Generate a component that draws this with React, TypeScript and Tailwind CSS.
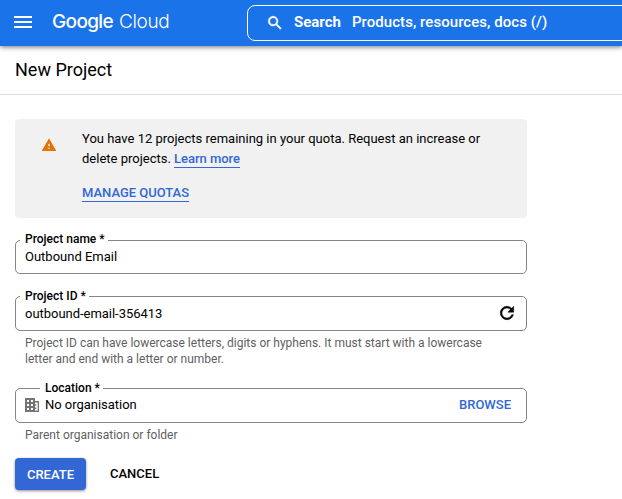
import type { ReactNode } from 'react';

function WarningIcon() {
  return (
    <svg className="mt-[1px] h-[16px] w-[16px] shrink-0" viewBox="0 0 24 24" fill="#e37400">
      <path d="M1 21h22L12 2 1 21zm12-3h-2v-2h2v2zm0-4h-2v-4h2v4z" />
    </svg>
  );
}

function OutlinedField({
  label,
  labelClass,
  className,
  children,
}: {
  label: string;
  labelClass: string;
  className: string;
  children: ReactNode;
}) {
  return (
    <div className={`relative flex w-[512px] items-center rounded-[5px] border border-[#80868b] ${className}`}>
      <span
        className={`absolute bg-white pr-[3px] pl-[5px] text-[12px] leading-4 font-medium whitespace-nowrap ${labelClass}`}
      >
        {label}
      </span>
      {children}
    </div>
  );
}

export default function App() {
  return (
    <div className="h-[499px] w-[622px] overflow-hidden bg-white font-[Roboto,sans-serif] text-[13px] text-black">
      <header className="relative flex h-[46px] items-center bg-[#1a73e8] text-white shadow-[0_1px_5px_rgba(0,0,0,0.55)]">
        <svg className="-mt-[2px] ml-[14px] h-[12px] w-[18px] shrink-0" viewBox="0 0 18 12" fill="#fff">
          <path d="M0 0h18v2H0zM0 5h18v2H0zM0 10h18v2H0z" />
        </svg>
        <div className="-mt-[3px] ml-[20px] flex w-[195px] shrink-0 gap-[5px] text-[19px] leading-6 font-[Inter,sans-serif]">
          <span className="w-[62px] font-medium tracking-[-0.65px]">Google</span>
          <span className="font-light tracking-[-0.35px]">Cloud</span>
        </div>
        <div className="-mt-[1px] flex h-[36px] w-[390px] shrink-0 items-center rounded-[8px] border border-white">
          <svg className="ml-[18px] h-[18px] w-[18px] shrink-0" viewBox="0 0 24 24" fill="#fff" stroke="#fff" strokeWidth="0.6">
            <path d="M15.5 14h-.79l-.28-.27C15.41 12.59 16 11.11 16 9.5 16 5.91 13.09 3 9.5 3S3 5.91 3 9.5 5.91 16 9.5 16c1.61 0 3.09-.59 4.23-1.57l.27.28v.79l5 4.99L20.49 19l-4.99-5zm-6 0C7.01 14 5 11.99 5 9.5S7.01 5 9.5 5 14 7.01 14 9.5 11.99 14 9.5 14z" />
          </svg>
          <span className="ml-[10px] w-[58px] text-[15px] font-bold">Search</span>
          <span className="text-[15px] font-medium tracking-[0.05px] whitespace-nowrap">Products, resources, docs (/)</span>
        </div>
      </header>

      <div className="flex h-[49px] items-center border-b border-[#dadce0] pl-[15px]">
        <h1 className="text-[18px] leading-6">New Project</h1>
      </div>

      <main className="flex flex-col items-start pl-[15px]">
        <section className="mt-[24px] flex h-[99px] w-[512px] rounded-[4px] bg-[#f1f1f1] pt-[10px] pl-[26px]">
          <div className="mt-[7px] w-[41px] shrink-0">
            <WarningIcon />
          </div>
          <div className="w-[420px] leading-5">
            <p>
              You have 12 projects remaining in your quota. Request an increase or
              <br />
              delete projects.{' '}
              <a className="border-b border-[#3367d6] pb-px font-medium tracking-[-0.03px] text-[#3367d6]">Learn more</a>
            </p>
            <p className="mt-[14px]">
              <a className="border-b border-[#3367d6] pb-px font-medium tracking-[-0.02px] text-[#3367d6]">MANAGE QUOTAS</a>
            </p>
          </div>
        </section>

        <OutlinedField label="Project name *" labelClass="left-[4px] top-[-10px]" className="mt-[22px] h-[34px] pl-[9px]">
          <span>Outbound Email</span>
        </OutlinedField>

        <OutlinedField label="Project ID *" labelClass="left-[4px] top-[-9px]" className="mt-[22px] h-[35px] pl-[9px]">
          <span className="w-[472px] tracking-[-0.03px]">outbound-email-356413</span>
          <svg className="-mt-px h-[20px] w-[20px]" viewBox="0 0 24 24" fill="#000" stroke="#000" strokeWidth="0.6">
            <path d="M17.65 6.35C16.2 4.9 14.21 4 12 4c-4.42 0-7.99 3.58-7.99 8s3.57 8 7.99 8c3.73 0 6.84-2.55 7.73-6h-2.08c-.82 2.33-3.04 4-5.65 4-3.31 0-6-2.69-6-6s2.69-6 6-6c1.66 0 3.14.69 4.22 1.78L13 11h7V4l-2.35 2.35z" />
          </svg>
        </OutlinedField>
        <p className="mt-[4px] ml-[10px] text-[12px] leading-4 text-[#5f5f5f]">
          Project ID can have lowercase letters, digits or hyphens. It must start with a lowercase
          <br />
          letter and end with a letter or number.
        </p>

        <OutlinedField label="Location *" labelClass="left-[24px] top-[-9px]" className="mt-[21px] h-[35px] pb-[2px] pl-[9px]">
          <svg className="h-[14px] w-[14px]" viewBox="0 0 14 14" fill="#757575" fillRule="evenodd">
            <path d="M0 0h10v3h4v11H0zM2 2h2v2H2zM6 2h2v2H6zM2 6h2v2H2zM6 6h2v2H6zM2 10h2v2H2zM6 10h2v2H6zM10 4.5h2.7v8H10v-1.5h1.3v-1.6H10V7.8h1.3V6.2H10z" />
          </svg>
          <span className="ml-[6px] w-[414px] tracking-[-0.03px]">No organisation</span>
          <button className="font-medium text-[#3367d6]">BROWSE</button>
        </OutlinedField>
        <p className="mt-[4px] ml-[10px] text-[12px] leading-4 text-[#5f5f5f]">Parent organisation or folder</p>

        <div className="mt-[15px] flex items-center font-medium">
          <button className="h-[32px] w-[71px] rounded-[4px] bg-[#3367d6] pt-px text-white shadow-[0_1px_3px_rgba(0,0,0,0.45)]">
            CREATE
          </button>
          <button className="ml-[24px]">CANCEL</button>
        </div>
      </main>
    </div>
  );
}
